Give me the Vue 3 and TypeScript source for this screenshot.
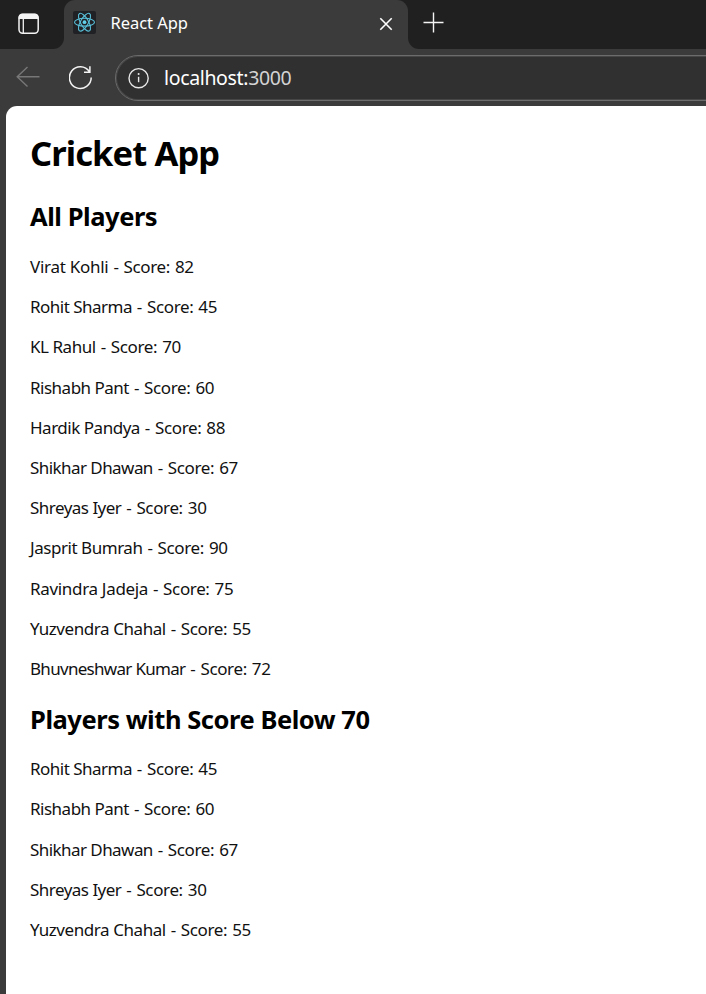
<script setup lang="ts">
interface Player {
  name: string
  score: number
  tracking: number
}

const players: Player[] = [
  { name: 'Virat Kohli', score: 82, tracking: -0.27 },
  { name: 'Rohit Sharma', score: 45, tracking: -0.52 },
  { name: 'KL Rahul', score: 70, tracking: -0.45 },
  { name: 'Rishabh Pant', score: 60, tracking: -0.5 },
  { name: 'Hardik Pandya', score: 88, tracking: -0.48 },
  { name: 'Shikhar Dhawan', score: 67, tracking: -0.56 },
  { name: 'Shreyas Iyer', score: 30, tracking: -0.52 },
  { name: 'Jasprit Bumrah', score: 90, tracking: -0.46 },
  { name: 'Ravindra Jadeja', score: 75, tracking: -0.32 },
  { name: 'Yuzvendra Chahal', score: 55, tracking: -0.43 },
  { name: 'Bhuvneshwar Kumar', score: 72, tracking: -0.7 },
]

const below70 = players.filter((p) => p.score < 70)
</script>

<template>
  <div class="window">
    <header class="tabs">
      <div class="strip left">
        <svg class="panel-icon" width="22" height="22" viewBox="0 0 22 22" fill="none" stroke="#f4f4f4" stroke-width="1.5">
          <rect x="1" y="1.2" width="19.2" height="19" rx="3.6" />
          <path d="M1.4 5.2V4.5Q1.4 1.5 4.5 1.5H16.7Q19.8 1.5 19.8 4.5V5.2Z" fill="#f4f4f4" />
          <path d="M5.3 6V20" stroke-width="1.3" />
        </svg>
      </div>
      <div class="tab">
        <svg class="favicon" width="23" height="23" viewBox="0 0 23 23">
          <rect width="23" height="23" rx="2" fill="#202124" />
          <g fill="none" stroke="#58bfd8" stroke-width="1.1">
            <ellipse cx="11.5" cy="11.2" rx="10" ry="3.9" />
            <ellipse cx="11.5" cy="11.2" rx="10" ry="3.9" transform="rotate(60 11.5 11.2)" />
            <ellipse cx="11.5" cy="11.2" rx="10" ry="3.9" transform="rotate(120 11.5 11.2)" />
          </g>
          <circle cx="11.5" cy="11.2" r="1.9" fill="#61cfe8" />
        </svg>
        <span class="tab-title">React App</span>
        <svg class="close" width="14" height="14" viewBox="0 0 14 14" stroke="#fff" stroke-width="1.6">
          <path d="M1.3 1.3L12.7 12.7M12.7 1.3L1.3 12.7" />
        </svg>
      </div>
      <div class="strip right">
        <svg class="plus" width="21" height="21" viewBox="0 0 21 21" stroke="#f4f4f4" stroke-width="1.4">
          <path d="M0.5 10.5H20.5M10.5 0.5V20.5" />
        </svg>
      </div>
    </header>
    <nav class="toolbar">
      <svg class="back" width="24" height="22" viewBox="0 0 24 22" fill="none" stroke="#777" stroke-width="1.4">
        <path d="M23.5 10.7H1M11.5 1L1.2 10.7L11.5 20.4" />
      </svg>
      <svg class="reload" width="24" height="25" viewBox="0 0 24 25" fill="none" stroke="#f4f4f4" stroke-width="1.5">
        <path d="M22.2 12.6A10.9 10.9 0 1 1 20.4 6.6M20.9 1.3V7.3H15" />
      </svg>
      <div class="address">
        <svg class="info" width="22" height="22" viewBox="0 0 22 22" fill="none" stroke="#e8e8e8" stroke-width="1.4">
          <circle cx="10.6" cy="11.2" r="9.6" />
          <path d="M10.6 9.8V15.2" />
          <circle cx="10.6" cy="7" r="1" fill="#e8e8e8" stroke="none" />
        </svg>
        <span class="url">localhost:<span class="port">3000</span></span>
      </div>
    </nav>
    <main class="page">
      <h1>Cricket App</h1>
      <h2>All Players</h2>
      <p v-for="p in players" :key="p.name">
        <span :style="{ letterSpacing: p.tracking + 'px' }">{{ p.name }}</span><span class="score"> - Score: {{ p.score }}</span>
      </p>
      <h2 class="second">Players with Score Below 70</h2>
      <p v-for="p in below70" :key="p.name">
        <span :style="{ letterSpacing: p.tracking + 'px' }">{{ p.name }}</span><span class="score"> - Score: {{ p.score }}</span>
      </p>
    </main>
  </div>
</template>

<style>
body {
  margin: 0;
  overflow: hidden;
}
</style>

<style scoped>
.window {
  width: 706px;
  height: 994px;
  overflow: hidden;
  background: #3b3b3b;
  font-family: 'Segoe UI', 'Noto Sans', sans-serif;
  display: flex;
  flex-direction: column;
}
svg {
  flex: none;
  display: block;
}
.tabs {
  display: flex;
  height: 49px;
  flex: none;
  background: linear-gradient(#202020 50%, #3b3b3b 50%);
}
.strip {
  background: #202020;
}
.left {
  width: 64px;
  border-bottom-right-radius: 11px;
}
.right {
  flex: 1;
  border-bottom-left-radius: 11px;
}
.panel-icon {
  margin: 13px 0 0 18px;
}
.plus {
  margin: 12px 0 0 15px;
}
.tab {
  width: 344px;
  background: #3b3b3b;
  border-radius: 11px 11px 0 0;
  display: flex;
  align-items: center;
  box-sizing: border-box;
  padding: 0 15px 4px 9px;
}
.tab-title {
  flex: 1;
  margin-left: 14.5px;
  font-size: 16.5px;
  line-height: 24px;
  color: #fff;
  letter-spacing: -0.04px;
}
.close {
  margin-top: 2px;
}
.toolbar {
  display: flex;
  height: 57px;
  flex: none;
  align-items: flex-start;
}
.back {
  margin: 17px 0 0 16px;
}
.reload {
  margin: 16px 0 0 29px;
}
.address {
  flex: 1;
  height: 46px;
  margin: 6px -30px 0 22px;
  box-sizing: border-box;
  border: 1px solid #6c6c6c;
  box-shadow: inset 0 0 0 1px #464646;
  border-radius: 23px;
  background: #303030;
  display: flex;
  align-items: center;
  padding-left: 12px;
}
.url {
  margin-left: 14px;
  font-size: 19.5px;
  line-height: 28px;
  letter-spacing: -0.35px;
  color: #fff;
}
.port {
  color: #d4d4d4;
}
.page {
  flex: 1;
  margin-left: 6px;
  padding: 23px 24px 0;
  background: #fff;
  border-top-left-radius: 11px;
  color: #000;
}
h1,
h2,
p {
  margin: 0;
  white-space: nowrap;
}
h1 {
  font-size: 34.5px;
  line-height: 48px;
  letter-spacing: -0.9px;
}
h2 {
  margin: 21px 0 13px;
  font-size: 25.5px;
  line-height: 36px;
  letter-spacing: -0.45px;
}
p {
  font-size: 17px;
  line-height: 40.2px;
  color: #111;
}
.score {
  letter-spacing: -0.36px;
  word-spacing: 0.9px;
}
.second {
  margin: 12px 0;
}
</style>
